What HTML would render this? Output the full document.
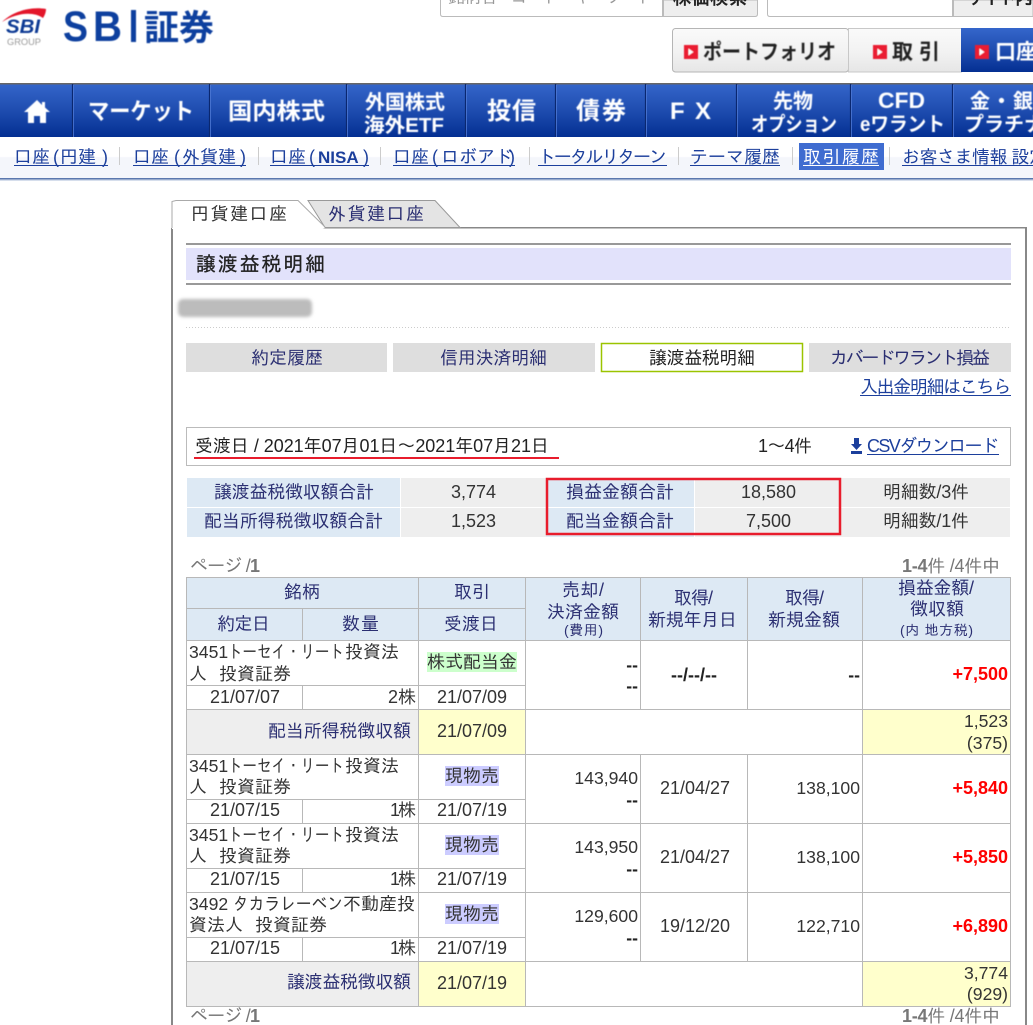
<!DOCTYPE html>
<html lang="ja"><head><meta charset="utf-8"><title>譲渡益税明細</title>
<style>
html,body{margin:0;padding:0;background:#fff;width:1033px;height:1025px;overflow:hidden}
svg{display:block}
text{font-family:"Liberation Sans","IPAGothic","Noto Sans CJK JP",sans-serif;font-size:18px;fill:#333}
.n{font-family:"Liberation Sans","Noto Sans CJK JP",sans-serif;font-weight:700;fill:#fff;font-size:23px}
.k{font-family:"Liberation Sans","Noto Sans CJK JP",sans-serif;font-weight:700;fill:#222;font-size:21px}
.l{fill:#1c3f9c}
.h{fill:#2b2f72}
.g{fill:#777}
.r{fill:#f00;font-weight:700;text-anchor:end}
.e{text-anchor:end;font-size:17.6px}
.d{font-weight:700;fill:#222}
</style></head><body>
<svg width="1033" height="1025" viewBox="0 0 1033 1025" xmlns="http://www.w3.org/2000/svg">
<defs>
<linearGradient id="nav" x1="0" y1="0" x2="0" y2="1"><stop offset="0" stop-color="#3566cb"/><stop offset=".5" stop-color="#1f4db0"/><stop offset="1" stop-color="#042f92"/></linearGradient>
<linearGradient id="tb" x1="0" y1="0" x2="0" y2="1"><stop offset="0" stop-color="#fafafa"/><stop offset=".55" stop-color="#f2f2f2"/><stop offset="1" stop-color="#e6e6e6"/></linearGradient>
<filter id="bl" x="-5%" y="-30%" width="110%" height="160%"><feGaussianBlur stdDeviation=".45"/></filter>
<filter id="bl2" x="-10%" y="-40%" width="120%" height="180%"><feGaussianBlur stdDeviation="1.6"/></filter>
<linearGradient id="sub" x1="0" y1="0" x2="0" y2="1"><stop offset="0" stop-color="#fff"/><stop offset=".48" stop-color="#fff"/><stop offset=".5" stop-color="#f4f6fb"/><stop offset="1" stop-color="#f4f6fb"/></linearGradient>
</defs>

<!-- logo -->
<g filter="url(#bl)">
<path d="M2 22C12 12 30 6 46 9C46 12 45 15 43 18C33 11 16 13 2 22Z" fill="#e3132a"/>
<text x="6" y="33" style="font-size:19px;font-weight:700;font-style:italic;fill:#0b3a94" textLength="34" lengthAdjust="spacingAndGlyphs">SBI</text>
<text x="7" y="45" style="font-size:9px;fill:#9a9a9a" textLength="34" lengthAdjust="spacingAndGlyphs">GROUP</text>
<text x="63" y="41" style="font-size:43px;font-weight:700;fill:#0f3f9f" textLength="25" lengthAdjust="spacingAndGlyphs">S</text>
<text x="93" y="41" style="font-size:43px;font-weight:700;fill:#0f3f9f" textLength="29" lengthAdjust="spacingAndGlyphs">B</text>
<rect x="131" y="10" width="5" height="32" fill="#0f3f9f"/>
<text x="144" y="40" style="font-family:'Noto Sans CJK JP',sans-serif;font-size:35px;font-weight:700;fill:#0f3f9f" textLength="70">証券</text>
</g>

<!-- search top -->
<path d="M440.500 0V14Q440.500 16.500 443 16.500H662.500V0" fill="#fff" stroke="#bbb"/>
<text x="448" y="3" style="fill:#999;font-size:17px" textLength="205">銘柄名・コード・キーワード</text>
<path d="M663.500 0V16.500H755Q757.500 16.500 757.500 14V0Z" fill="#eee" stroke="#bbb"/>
<text x="673" y="4" class="d" style="font-size:18px" textLength="74">株価検索</text>
<path d="M767.500 0V14Q767.500 16.500 770 16.500H952.500V0" fill="#fff" stroke="#bbb"/>
<path d="M953.500 0V16.500H1033V0Z" fill="#eee" stroke="#bbb"/>
<text x="966" y="4" class="d" style="font-size:18px" textLength="67">サイト内</text>

<!-- global buttons -->
<rect x="672.500" y="28.500" width="176" height="43.500" rx="3" fill="url(#tb)" stroke="#b5b5b5"/>
<rect x="848.500" y="28.500" width="113" height="43.500" fill="url(#tb)" stroke="#c8c8c8"/>
<rect x="961" y="28" width="72" height="44" fill="url(#nav)"/>
<g filter="url(#bl)">
<rect x="684" y="45" width="14" height="14" fill="#ea1c30"/><path d="M688.500 48.500L693.500 52L688.500 55.500Z" fill="#fff"/>
<rect x="873" y="45" width="14" height="14" fill="#ea1c30"/><path d="M877.500 48.500L882.500 52L877.500 55.500Z" fill="#fff"/>
<rect x="975" y="45" width="14" height="14" fill="#ea1c30"/><path d="M979.500 48.500L984.500 52L979.500 55.500Z" fill="#fff"/>
<text x="703" y="59" class="k" textLength="133" lengthAdjust="spacingAndGlyphs">ポートフォリオ</text>
<text x="892" y="59" class="k" textLength="48">取 引</text>
<text x="995" y="59" class="k" style="fill:#fff" textLength="42">口座</text>
</g>

<!-- nav -->
<rect x="0" y="83" width="1033" height="54" fill="url(#nav)"/>
<rect x="0" y="83" width="1033" height="1.500" fill="#666"/>
<path d="M72.500 84V137M209.500 84V137M346.500 84V137M465.500 84V137M555.500 84V137M645.500 84V137M736.500 84V137M850.500 84V137M952.500 84V137" stroke="#0a276f" stroke-width="1.200"/>
<path d="M73.500 85V137M210.500 85V137M347.500 85V137M466.500 85V137M556.500 85V137M646.500 85V137M737.500 85V137M851.500 85V137M953.500 85V137" stroke="#4f7ad6" stroke-width=".8"/>
<g filter="url(#bl)">
<path d="M37 100L24 112H28V123H34V116H40V123H46V112H50L45 107.500V102H42V105Z" fill="#fff"/>
<text x="88" y="119" class="n" textLength="106" lengthAdjust="spacingAndGlyphs">マーケット</text>
<text x="228" y="119" class="n" textLength="97" lengthAdjust="spacingAndGlyphs">国内株式</text>
<text x="365" y="109" class="n" style="font-size:20px" textLength="80">外国株式</text>
<text x="364" y="132" class="n" style="font-size:20px" textLength="80" lengthAdjust="spacingAndGlyphs">海外ETF</text>
<text x="487" y="119" class="n" style="font-size:24px" textLength="49">投信</text>
<text x="576" y="119" class="n" style="font-size:24px" textLength="50">債券</text>
<text x="670" y="119" class="n" style="font-size:24px" textLength="41">F X</text>
<text x="773" y="108" class="n" style="font-size:20px" textLength="40">先物</text>
<text x="751" y="131" class="n" style="font-size:20px" textLength="86" lengthAdjust="spacingAndGlyphs">オプション</text>
<text x="878" y="108" class="n" style="font-size:22px" textLength="47" lengthAdjust="spacingAndGlyphs">CFD</text>
<text x="860" y="131" class="n" style="font-size:20px" textLength="85" lengthAdjust="spacingAndGlyphs">eワラント</text>
<text x="970" y="108" class="n" style="font-size:20px" textLength="63">金・銀</text>
<text x="964" y="131" class="n" style="font-size:20px" textLength="80" lengthAdjust="spacingAndGlyphs">プラチナ</text>
</g>

<!-- sub nav -->
<rect x="0" y="137" width="1033" height="41" fill="url(#sub)"/>
<rect x="0" y="178" width="1033" height="1.500" fill="#5b78ae"/>
<rect x="0" y="179.500" width="1033" height="1.500" fill="#d6deec"/>
<path d="M119.500 147V165M258.500 147V165M380.500 147V165M529.500 147V165M678.500 147V165M792.500 147V165M889.500 147V165" stroke="#ccc"/>
<rect x="799" y="143" width="85" height="27" fill="#3f6cd0"/>
<text x="14" y="163" class="l">口座<tspan x="53">(</tspan><tspan x="60">円建</tspan><tspan x="102">)</tspan></text>
<text x="133" y="163" class="l">口座<tspan x="174">(</tspan><tspan x="182">外貨建</tspan><tspan x="240">)</tspan></text>
<text x="270" y="163" class="l">口座<tspan x="309">(</tspan><tspan x="318" font-weight="700" style="font-size:17px">NISA</tspan><tspan x="363">)</tspan></text>
<text x="393" y="163" class="l">口座<tspan x="432">(</tspan><tspan x="441">ロボアド</tspan><tspan x="509">)</tspan></text>
<text x="538" y="163" class="l" textLength="129">トータルリターン</text>
<text x="690" y="163" class="l" textLength="90">テーマ履歴</text>
<text x="803" y="163" style="fill:#fff" textLength="76">取引履歴</text>
<text x="902" y="163" class="l" textLength="145">お客さま情報 設定</text>
<path d="M14 165.500H108M133 165.500H246M270 165.500H369M393 165.500H515M538 165.500H667M690 165.500H780M902 165.500H1033" stroke="#1c3f9c"/>
<path d="M803 165.500H879" stroke="#fff"/>

<!-- panel -->
<rect x="171" y="228" width="2" height="797" fill="#888"/>
<rect x="1025" y="228" width="2" height="797" fill="#888"/>
<rect x="173" y="227" width="854" height="1.500" fill="#888"/>
<path d="M308 200.500H435L460 227.500H325Z" fill="#e4e4e4" stroke="#999"/>
<path d="M172 229V201.500L176 200.500H298L325 228L320 229Z" fill="#fff"/>
<path d="M172 228V201.500L176 200.500H298L325 227" fill="none" stroke="#aaa"/>
<text x="191" y="220" style="font-size:18px" textLength="96">円貨建口座</text>
<text x="328" y="220" class="h" style="font-size:18px" textLength="96">外貨建口座</text>

<rect x="186" y="243" width="825" height="2" fill="#999"/>
<rect x="186" y="248" width="825" height="32" fill="#e2e2fb"/>
<rect x="186" y="283" width="825" height="2" fill="#999"/>
<text x="196" y="271" style="font-size:20px;fill:#222;stroke:#222;stroke-width:.3" textLength="129">譲渡益税明細</text>

<rect x="178" y="299" width="134" height="18" rx="5" fill="#bcbcbc" filter="url(#bl2)"/>
<path d="M186 327.500H1011" stroke="#ccc" stroke-dasharray="1 2"/>

<rect x="186" y="343" width="201" height="29" fill="#dedede"/>
<rect x="393" y="343" width="202" height="29" fill="#dedede"/>
<rect x="601.500" y="343.500" width="201" height="28" fill="#fff" stroke="#9bc400" stroke-width="1.500"/>
<rect x="809" y="343" width="202" height="29" fill="#dedede"/>
<text x="251" y="364" class="h" textLength="72">約定履歴</text>
<text x="440" y="364" class="h" textLength="107">信用決済明細</text>
<text x="649" y="364" style="fill:#222" textLength="106">譲渡益税明細</text>
<text x="830" y="364" class="h" textLength="160">カバードワラント損益</text>
<text x="860" y="393" class="l" textLength="151">入出金明細はこちら</text>
<path d="M860 395.500H1011" stroke="#1c3f9c"/>

<rect x="186.500" y="427.500" width="824" height="38" fill="#fff" stroke="#bbb"/>
<text x="195" y="452" style="fill:#222" textLength="354">受渡日 / 2021年07月01日～2021年07月21日</text>
<rect x="194" y="457" width="365" height="2" fill="#e81c2c"/>
<text x="758" y="452" style="fill:#222" textLength="54">1～4件</text>
<path d="M854 438H859V444H862L856.500 450L851 444H854ZM851 451H862V454H851Z" fill="#1c3f9c"/>
<text x="867" y="452" class="l" textLength="132">CSVダウンロード</text>
<path d="M867 454.500H999" stroke="#1c3f9c"/>

<!-- summary -->
<rect x="187" y="478" width="213" height="29" fill="#dde9f4"/>
<rect x="187" y="508" width="213" height="29" fill="#dde9f4"/>
<rect x="401" y="478" width="145" height="29" fill="#eee"/>
<rect x="401" y="508" width="145" height="29" fill="#eee"/>
<rect x="546" y="478" width="148" height="29" fill="#dde9f4"/>
<rect x="546" y="508" width="148" height="29" fill="#dde9f4"/>
<rect x="695" y="478" width="315" height="29" fill="#eee"/>
<rect x="695" y="508" width="315" height="29" fill="#eee"/>
<text x="214" y="498" class="h" textLength="160">譲渡益税徴収額合計</text>
<text x="204" y="527" class="h" textLength="179">配当所得税徴収額合計</text>
<text x="451" y="498">3,774</text>
<text x="451" y="527">1,523</text>
<text x="566" y="498" class="h" textLength="108">損益金額合計</text>
<text x="566" y="527" class="h" textLength="108">配当金額合計</text>
<text x="741" y="498">18,580</text>
<text x="746" y="527">7,500</text>
<text x="883" y="498" textLength="86">明細数/3件</text>
<text x="883" y="527" textLength="86">明細数/1件</text>
<rect x="547" y="479" width="293" height="55" fill="none" stroke="#e81c2c" stroke-width="2.500"/>

<text x="190" y="572" class="g" textLength="70">ページ /<tspan font-weight="700">1</tspan></text>
<text x="902" y="572" class="g" textLength="98"><tspan font-weight="700">1-4</tspan>件 /4件中</text>

<!-- table fills -->
<rect x="186" y="577" width="824" height="63" fill="#dde9f4"/>
<rect x="186" y="709" width="232" height="45" fill="#eee"/>
<rect x="186" y="961" width="232" height="45" fill="#eee"/>
<rect x="418" y="709" width="107" height="45" fill="#ffc"/>
<rect x="418" y="961" width="107" height="45" fill="#ffc"/>
<rect x="862" y="709" width="148" height="45" fill="#ffc"/>
<rect x="862" y="961" width="148" height="45" fill="#ffc"/>
<path shape-rendering="crispEdges" fill="none" stroke="#b8b8b8" d="M186.500 577V1006.500M1010.500 577V1006.500M418.500 577V1006.500M525.500 577V1006.500M862.500 577V1006.500M640.500 577V709M640.500 754V961M747.500 577V709M747.500 754V961M302.500 608V640M302.500 685V709M302.500 799V823M302.500 868V892M302.500 937V961M186 577.500H1011M186 640.500H1011M186 709.500H1011M186 754.500H1011M186 823.500H1011M186 892.500H1011M186 961.500H1011M186 1006.500H1011M186 608.500H525M186 685.500H525M186 799.500H525M186 868.500H525M186 937.500H525"/>

<!-- header -->
<text x="284" y="598" class="h" textLength="36">銘柄</text>
<text x="454" y="598" class="h" textLength="36">取引</text>
<text x="217" y="630" class="h" textLength="53">約定日</text>
<text x="342" y="630" class="h" textLength="37">数量</text>
<text x="444" y="630" class="h" textLength="54">受渡日</text>
<text x="562" y="596" class="h" textLength="42">売却/</text>
<text x="547" y="618" class="h" textLength="72">決済金額</text>
<text x="564" y="635" class="h" style="font-size:14px" textLength="39">(費用)</text>
<text x="674" y="604" class="h" textLength="39">取得/</text>
<text x="648" y="626" class="h" textLength="89">新規年月日</text>
<text x="785" y="604" class="h" textLength="39">取得/</text>
<text x="768" y="626" class="h" textLength="72">新規金額</text>
<text x="898" y="594" class="h" textLength="76">損益金額/</text>
<text x="910" y="615" class="h" textLength="54">徴収額</text>
<text x="900" y="635" class="h" style="font-size:14px" textLength="73">(内 地方税)</text>

<!-- row 1 -->
<text x="189" y="658" style="font-size:17.600px">3451</text>
<text x="228" y="658" textLength="116" lengthAdjust="spacingAndGlyphs">トーセイ・リート</text>
<text x="345" y="658">投資法</text>
<text x="189" y="680">人</text><text x="219" y="680">投資証券</text>
<rect x="427" y="652" width="90" height="20" fill="#cfc"/>
<text x="427" y="668" textLength="90">株式配当金</text>
<text x="210" y="703">21/07/07</text>
<text x="388" y="703" textLength="28">2株</text>
<text x="437" y="703">21/07/09</text>
<text x="638" y="671" class="e d">--</text>
<text x="638" y="692" class="e d">--</text>
<text x="671" y="681" class="d" textLength="46">--/--/--</text>
<text x="860" y="681" class="e d">--</text>
<text x="1008" y="680" class="r">+7,500</text>

<!-- tax 1 -->
<text x="268" y="737" class="h" textLength="143">配当所得税徴収額</text>
<text x="437" y="737">21/07/09</text>
<text x="1008" y="727" class="e">1,523</text>
<text x="1008" y="749" class="e">(375)</text>

<!-- row 2 -->
<text x="189" y="772" style="font-size:17.600px">3451</text>
<text x="228" y="772" textLength="116" lengthAdjust="spacingAndGlyphs">トーセイ・リート</text>
<text x="345" y="772">投資法</text>
<text x="189" y="793">人</text><text x="219" y="793">投資証券</text>
<rect x="445" y="766" width="54" height="20" fill="#ccf"/>
<text x="445" y="782" textLength="54">現物売</text>
<text x="210" y="816">21/07/15</text>
<text x="390" y="816" textLength="26">1株</text>
<text x="437" y="816">21/07/19</text>
<text x="638" y="784" class="e">143,940</text>
<text x="638" y="806" class="e d">--</text>
<text x="660" y="794">21/04/27</text>
<text x="860" y="794" class="e">138,100</text>
<text x="1008" y="794" class="r">+5,840</text>

<!-- row 3 -->
<text x="189" y="841" style="font-size:17.600px">3451</text>
<text x="228" y="841" textLength="116" lengthAdjust="spacingAndGlyphs">トーセイ・リート</text>
<text x="345" y="841">投資法</text>
<text x="189" y="862">人</text><text x="219" y="862">投資証券</text>
<rect x="445" y="835" width="54" height="20" fill="#ccf"/>
<text x="445" y="851" textLength="54">現物売</text>
<text x="210" y="885">21/07/15</text>
<text x="390" y="885" textLength="26">1株</text>
<text x="437" y="885">21/07/19</text>
<text x="638" y="853" class="e">143,950</text>
<text x="638" y="875" class="e d">--</text>
<text x="660" y="863">21/04/27</text>
<text x="860" y="863" class="e">138,100</text>
<text x="1008" y="863" class="r">+5,850</text>

<!-- row 4 -->
<text x="189" y="910" style="font-size:17.600px">3492</text>
<text x="233" y="910" textLength="110" lengthAdjust="spacingAndGlyphs">タカラレーベン</text>
<text x="343" y="910">不動産投</text>
<text x="189" y="931">資法人</text><text x="255" y="931">投資証券</text>
<rect x="445" y="904" width="54" height="20" fill="#ccf"/>
<text x="445" y="920" textLength="54">現物売</text>
<text x="210" y="954">21/07/15</text>
<text x="390" y="954" textLength="26">1株</text>
<text x="437" y="954">21/07/19</text>
<text x="638" y="922" class="e">129,600</text>
<text x="638" y="944" class="e d">--</text>
<text x="660" y="932">19/12/20</text>
<text x="860" y="932" class="e">122,710</text>
<text x="1008" y="932" class="r">+6,890</text>

<!-- tax 2 -->
<text x="287" y="988" class="h" textLength="124">譲渡益税徴収額</text>
<text x="437" y="989">21/07/19</text>
<text x="1008" y="979" class="e">3,774</text>
<text x="1008" y="1000" class="e">(929)</text>

<text x="190" y="1022" class="g" textLength="70">ページ /<tspan font-weight="700">1</tspan></text>
<text x="902" y="1022" class="g" textLength="98"><tspan font-weight="700">1-4</tspan>件 /4件中</text>
</svg>
</body></html>
